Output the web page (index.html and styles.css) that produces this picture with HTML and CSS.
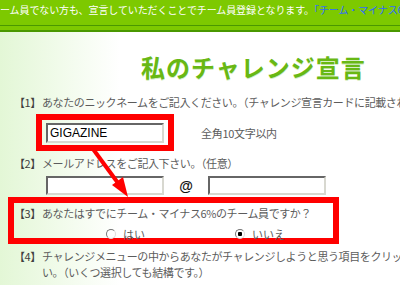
FILE: index.html
```html
<!DOCTYPE html>
<html>
<head>
  <meta charset="utf-8">
  <title>私のチャレンジ宣言</title>
  <link rel="stylesheet" href="styles.css">
</head>
<body>
  <div class="topbar">ーム員でない方も、宣言していただくことでチーム員登録となります。<a href="#" class="toplink">「チーム・マイナス6%」</a></div>
  <div class="subbar"></div>

  <h1 class="title">私のチャレンジ宣言</h1>

  <div class="q"><span class="num">【1】</span><span class="txt">あなたのニックネームをご記入ください。（チャレンジ宣言カードに記載されます）</span></div>
  <div class="field-row">
    <div class="mark-box">
      <input type="text" class="box-input" value="GIGAZINE">
    </div>
    <span class="hint">全角10文字以内</span>
  </div>

  <div class="q"><span class="num">【2】</span><span class="txt">メールアドレスをご記入下さい。（任意）</span></div>
  <div class="mail-row">
    <input type="text" class="box-input">
    <span class="at">@</span>
    <input type="text" class="box-input">
  </div>

  <div class="mark-box wide">
    <div class="q inbox"><span class="num">【3】</span><span class="txt">あなたはすでにチーム・マイナス6%のチーム員ですか？</span></div>
    <div class="radio-row">
      <label class="opt first"><input type="radio" name="member" class="radio">はい</label>
      <label class="opt"><input type="radio" name="member" class="radio" checked>いいえ</label>
    </div>
  </div>

  <div class="q last"><span class="num">【4】</span><span class="txt">チャレンジメニューの中からあなたがチャレンジしようと思う項目をクリックして下さ<br>い。（いくつ選択しても結構です。）</span></div>

  <!-- annotation arrow -->
  <svg class="arrow" width="400" height="285" viewBox="0 0 400 285">
    <line x1="93" y1="149" x2="118" y2="183" stroke="#ff0000" stroke-width="4"/>
    <polygon points="128,197 112,185 123,177" fill="#ff0000"/>
  </svg>
</body>
</html>
```

FILE: styles.css
```css
* {
  margin: 0;
  padding: 0;
  box-sizing: border-box;
}

body {
  width: 400px;
  height: 285px;
  overflow: hidden;
  position: relative;
  background: linear-gradient(to right, #e3f7d6 0, #ffffff 120px);
  font-family: "Noto Sans CJK JP", "Noto Sans", sans-serif;
  color: #5c5c5c;
}

.topbar {
  height: 26px;
  background-color: #7dc900;
  border-bottom: 1px solid #4a9800;
  color: #fff;
  font-size: 10px;
  line-height: 20px;
  letter-spacing: -0.1px;
  white-space: nowrap;
  overflow: hidden;
}

.toplink {
  color: #2f6bff;
  text-decoration: none;
}

.subbar {
  height: 6px;
  background-color: #7dc900;
  border-bottom: 2px solid #4a9800;
}

.title {
  margin-top: 20px;
  padding-left: 141px;
  font-size: 24px;
  line-height: 30px;
  font-weight: 700;
  letter-spacing: 1px;
  color: #68b814;
  text-shadow: 0 1px 0 #d6edc2;
}

.q {
  display: flex;
  margin-top: 12px;
  padding-left: 14px;
  font-size: 11px;
  line-height: 16px;
  letter-spacing: -0.4px;
  white-space: nowrap;
}

.num {
  width: 28px;
  flex: none;
  color: #404040;
}

.field-row {
  display: flex;
  align-items: center;
  margin-top: 4px;
}

.mark-box {
  display: flex;
  border: 6px solid #ff0000;
  margin-left: 36px;
  padding: 3px 4px 2px 4px;
}

.box-input {
  display: block;
  width: 118px;
  height: 20px;
  border: 2px solid;
  border-color: #666 #d8d8d0 #d8d8d0 #666;
  background: #fff;
  font-family: "Liberation Sans", Arial, sans-serif;
  font-size: 12px;
  color: #000;
  padding: 0 2px;
  outline: none;
}

.hint {
  margin-left: 27px;
  font-size: 11px;
  letter-spacing: -0.3px;
}

.field-row + .q {
  margin-top: 4px;
}

.mail-row {
  display: flex;
  align-items: center;
  margin-top: 5px;
  padding-left: 46px;
}

.mail-row .box-input {
  height: 19px;
}

.at {
  width: 44px;
  text-align: center;
  font-family: "Liberation Sans", Arial, sans-serif;
  font-weight: 700;
  font-size: 14px;
  color: #111;
}

.mark-box.wide {
  display: block;
  margin-top: 2px;
  margin-left: 8px;
  width: 331px;
  height: 47px;
  padding: 2px 0 0 0;
}

.q.inbox {
  margin-top: 0;
  padding-left: 0;
}

.radio-row {
  display: flex;
  align-items: center;
  height: 12px;
  margin-top: 7px;
  padding-left: 92px;
  font-size: 11px;
  line-height: 12px;
}

.opt {
  display: flex;
  align-items: center;
}

.opt.first {
  width: 129px;
}

.radio {
  appearance: none;
  width: 10px;
  height: 10px;
  margin-right: 7px;
  border-radius: 50%;
  border: 1px solid;
  border-color: #777 #ddd #ddd #777;
  background: #fff;
}

.radio:checked {
  background: radial-gradient(circle, #000 0, #000 2px, #fff 2.5px);
}

.q.last {
  margin-top: 4px;
}

.arrow {
  position: absolute;
  left: 0;
  top: 0;
}
```
